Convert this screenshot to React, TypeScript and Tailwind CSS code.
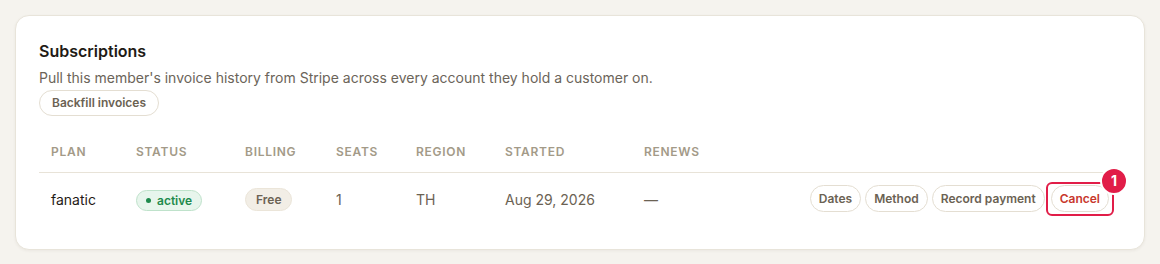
const pill =
  "h-[27px] rounded-full border border-[#e4ded2] bg-white px-2 text-[12px] font-semibold text-[#6b6253] leading-none";

const cols = "grid grid-cols-[85px_109px_91px_80px_89px_139px_1fr_auto] items-center";

function Header() {
  const heads = ["Plan", "Status", "Billing", "Seats", "Region", "Started", "Renews", ""];
  return (
    <div className={`${cols} border-b border-[#e8e3d8]`}>
      {heads.map((h, i) => (
        <div
          key={i}
          className="px-3 py-3 text-[12px] font-semibold uppercase leading-4 tracking-[0.06em] text-[#a39a88]"
        >
          {h}
        </div>
      ))}
    </div>
  );
}

function Row() {
  return (
    <div className={`${cols} text-[14px] leading-5`}>
      <div className="px-3 text-[#1f1b16]">fanatic</div>
      <div className="px-3">
        <span className="inline-flex h-[21px] items-center gap-[6px] rounded-full border border-[#bfe2cb] bg-[#e7f5ec] px-[9px] text-[12px] font-semibold text-[#1e8a4c]">
          <span className="h-[5px] w-[5px] rounded-full bg-[#1e8a4c]" />
          active
        </span>
      </div>
      <div className="px-3">
        <span className="inline-flex h-[23px] items-center rounded-full border border-[#ebe5d9] bg-[#f2eee6] px-[10px] text-[12px] font-semibold text-[#6b6253]">
          Free
        </span>
      </div>
      <div className="px-3 text-[#6b6253]">1</div>
      <div className="px-3 text-[#6b6253]">TH</div>
      <div className="px-3 text-[#6b6253]">Aug 29, 2026</div>
      <div className="px-3 text-[#6b6253]">—</div>
      <div className="flex items-center gap-1 px-3 pt-3 pb-[14px]">
        <button className={pill}>Dates</button>
        <button className={pill}>Method</button>
        <button className={pill}>Record payment</button>
        <span className="relative ml-0.5 inline-flex">
          <button className={`${pill} !text-[#c8372d]`}>Cancel</button>
          <span className="pointer-events-none absolute -top-[3px] -right-[5px] -bottom-[4px] -left-[5px] rounded-[6px] border-[2.5px] border-[#e11d48]" />
          <span className="absolute -top-[18px] -right-[19px] flex h-[28px] w-[28px] items-center justify-center rounded-full border-2 border-white bg-[#e11d48] text-[14px] font-bold text-white">
            1
          </span>
        </span>
      </div>
    </div>
  );
}

export default function App() {
  return (
    <div
      className="min-h-[264px] w-full bg-[#f5f3ee] px-[15px] pt-[15px]"
      style={{ fontFamily: "Inter, 'Noto Sans', sans-serif" }}
    >
      <div className="rounded-[14px] border border-[#e8e4da] bg-white p-[23px] shadow-[0_1px_3px_rgba(60,50,30,0.06)]">
        <h2 className="text-[16px] font-semibold leading-6 text-[#1f1b16]">Subscriptions</h2>
        <p className="mt-[5px] text-[14px] leading-5 text-[#6b6459]">
          Pull this member's invoice history from Stripe across every account they hold a customer on.
        </p>
        <button className="mt-0.5 h-[26px] rounded-full border border-[#e4ded2] bg-white px-3 text-[12px] font-semibold text-[#6b6253]">
          Backfill invoices
        </button>
        <div className="mt-4">
          <Header />
          <Row />
        </div>
      </div>
    </div>
  );
}
